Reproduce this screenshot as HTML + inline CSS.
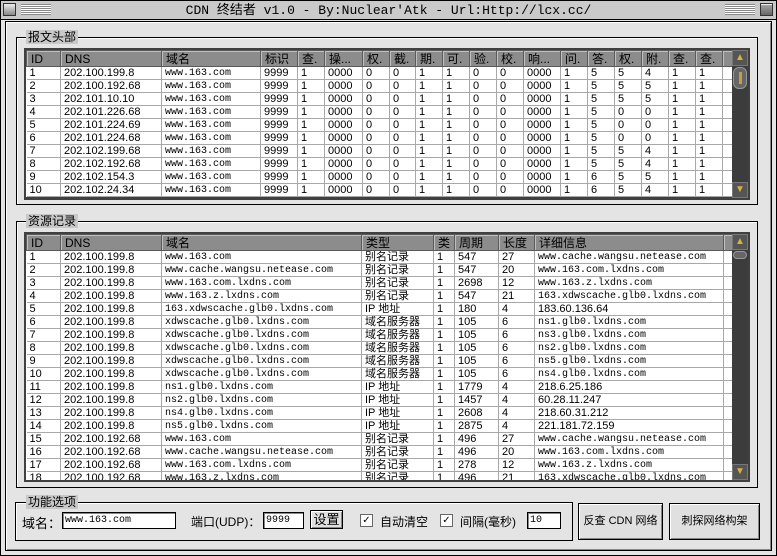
<!DOCTYPE html>
<html><head><meta charset="utf-8"><style>
*{box-sizing:border-box;margin:0;padding:0}
body{width:777px;height:556px;background:#e4e4e4;font-family:"Liberation Sans","WenQuanYi Zen Hei",sans-serif;font-size:12px;color:#000;position:relative;overflow:hidden}
.abs{position:absolute}
#win{left:0;top:0;width:777px;height:556px;border:1px solid #000;background:#e4e4e4}
#title{left:1px;top:1px;width:775px;height:19px;background:#cacaca;border-bottom:1px solid #000;text-align:center;font-family:"Liberation Mono","WenQuanYi Zen Hei",monospace;font-size:13px;line-height:19px}
#inner{left:5px;top:21px;width:767px;height:530px;border:1px solid #000;box-shadow:inset 1px 1px 0 #fff, inset -1px -1px 0 #888}
.grp{border:1px solid #000;box-shadow:1px 1px 0 #fff inset}
.lg{background:#c8c8c8;padding:0 2px;font-size:12px;line-height:14px}
table{border-collapse:collapse;table-layout:fixed;background:#fff}
td{height:13px;border-right:1px solid #a8a8a8;border-bottom:1px solid #a8a8a8;padding:0 0 0 3px;font-size:11px;line-height:12px;white-space:nowrap;overflow:hidden;vertical-align:middle}
th{height:16px;background:#8c8c8c;border:1px solid #5a5a5a;box-shadow:inset 1px 1px 0 #c0c0c0;font-weight:normal;text-align:left;padding-left:4px;font-size:12px;line-height:14px;white-space:nowrap;overflow:hidden}
td.m{font-family:"Liberation Mono",monospace;font-size:10px;line-height:11px;vertical-align:bottom}
.tbox{border:2px solid #404040;background:#404040;overflow:hidden}
.sb{background:#3c3c3c}
.arr{width:16px;height:16px;background:#555;border:1px solid #777;color:#d8b040;font-size:10px;text-align:center;line-height:14px}
.btn{background:#e0e0e0;border:1px solid #000;box-shadow:inset 1px 1px 0 #fff,inset -1px -1px 0 #888;text-align:center}
.inp{background:#fff;border:1px solid #000;box-shadow:inset 1px 1px 0 #888;font-family:"Liberation Mono",monospace;font-size:10px;line-height:16px;padding-left:2px}
.cb{width:13px;height:13px;background:#fff;border:1px solid #666;font-size:10px;line-height:11px;text-align:center}
</style></head><body>
<div id="win" class="abs"></div>
<div id="title" class="abs">CDN 终结者 v1.0 - By:Nuclear'Atk - Url:Http://lcx.cc/</div>
<div class="abs" style="left:3px;top:3px;width:13px;height:13px;border:1px solid #333;background:linear-gradient(#eee,#888)"></div>
<div class="abs" style="left:21px;top:4px;width:30px;height:11px;background:repeating-linear-gradient(#888 0 1px,#fff 1px 2px)"></div>
<div class="abs" style="left:725px;top:4px;width:30px;height:11px;background:repeating-linear-gradient(#888 0 1px,#fff 1px 2px)"></div>
<div class="abs" style="left:760px;top:3px;width:13px;height:13px;border:1px solid #333;background:linear-gradient(#aaa,#666);box-shadow:inset 0 6px 0 -5px #eee"></div>
<div id="inner" class="abs"></div>

<!-- group 1 -->
<div class="abs grp" style="left:16px;top:37px;width:742px;height:168px"></div>
<div class="abs lg" style="left:26px;top:30px">报文头部</div>
<div class="abs tbox" style="left:24px;top:48px;width:726px;height:152px">
<table style="width:706px">
<colgroup><col style="width:34px"><col style="width:101px"><col style="width:99px"><col style="width:37px"><col style="width:27px"><col style="width:38px"><col style="width:27px"><col style="width:26px"><col style="width:27px"><col style="width:27px"><col style="width:27px"><col style="width:27px"><col style="width:37px"><col style="width:27px"><col style="width:27px"><col style="width:27px"><col style="width:27px"><col style="width:27px"><col style="width:27px"><col style="width:10px"></colgroup>
<tr><th>ID</th><th>DNS</th><th>域名</th><th>标识</th><th>查.</th><th>操...</th><th>权.</th><th>截.</th><th>期.</th><th>可.</th><th>验.</th><th>校.</th><th>响...</th><th>问.</th><th>答.</th><th>权.</th><th>附.</th><th>查.</th><th>查.</th><th></th></tr>
<tr><td>1</td><td>202.100.199.8</td><td class="m">www.163.com</td><td>9999</td><td>1</td><td>0000</td><td>0</td><td>0</td><td>1</td><td>1</td><td>0</td><td>0</td><td>0000</td><td>1</td><td>5</td><td>5</td><td>4</td><td>1</td><td>1</td><td></td></tr>
<tr><td>2</td><td>202.100.192.68</td><td class="m">www.163.com</td><td>9999</td><td>1</td><td>0000</td><td>0</td><td>0</td><td>1</td><td>1</td><td>0</td><td>0</td><td>0000</td><td>1</td><td>5</td><td>5</td><td>5</td><td>1</td><td>1</td><td></td></tr>
<tr><td>3</td><td>202.101.10.10</td><td class="m">www.163.com</td><td>9999</td><td>1</td><td>0000</td><td>0</td><td>0</td><td>1</td><td>1</td><td>0</td><td>0</td><td>0000</td><td>1</td><td>5</td><td>5</td><td>5</td><td>1</td><td>1</td><td></td></tr>
<tr><td>4</td><td>202.101.226.68</td><td class="m">www.163.com</td><td>9999</td><td>1</td><td>0000</td><td>0</td><td>0</td><td>1</td><td>1</td><td>0</td><td>0</td><td>0000</td><td>1</td><td>5</td><td>0</td><td>0</td><td>1</td><td>1</td><td></td></tr>
<tr><td>5</td><td>202.101.224.69</td><td class="m">www.163.com</td><td>9999</td><td>1</td><td>0000</td><td>0</td><td>0</td><td>1</td><td>1</td><td>0</td><td>0</td><td>0000</td><td>1</td><td>5</td><td>0</td><td>0</td><td>1</td><td>1</td><td></td></tr>
<tr><td>6</td><td>202.101.224.68</td><td class="m">www.163.com</td><td>9999</td><td>1</td><td>0000</td><td>0</td><td>0</td><td>1</td><td>1</td><td>0</td><td>0</td><td>0000</td><td>1</td><td>5</td><td>0</td><td>0</td><td>1</td><td>1</td><td></td></tr>
<tr><td>7</td><td>202.102.199.68</td><td class="m">www.163.com</td><td>9999</td><td>1</td><td>0000</td><td>0</td><td>0</td><td>1</td><td>1</td><td>0</td><td>0</td><td>0000</td><td>1</td><td>5</td><td>5</td><td>4</td><td>1</td><td>1</td><td></td></tr>
<tr><td>8</td><td>202.102.192.68</td><td class="m">www.163.com</td><td>9999</td><td>1</td><td>0000</td><td>0</td><td>0</td><td>1</td><td>1</td><td>0</td><td>0</td><td>0000</td><td>1</td><td>5</td><td>5</td><td>4</td><td>1</td><td>1</td><td></td></tr>
<tr><td>9</td><td>202.102.154.3</td><td class="m">www.163.com</td><td>9999</td><td>1</td><td>0000</td><td>0</td><td>0</td><td>1</td><td>1</td><td>0</td><td>0</td><td>0000</td><td>1</td><td>6</td><td>5</td><td>5</td><td>1</td><td>1</td><td></td></tr>
<tr><td>10</td><td>202.102.24.34</td><td class="m">www.163.com</td><td>9999</td><td>1</td><td>0000</td><td>0</td><td>0</td><td>1</td><td>1</td><td>0</td><td>0</td><td>0000</td><td>1</td><td>6</td><td>5</td><td>4</td><td>1</td><td>1</td><td></td></tr>
</table></div>
<div class="abs sb" style="left:732px;top:50px;width:16px;height:148px"></div>
<div class="abs arr" style="left:732px;top:50px">▲</div>
<div class="abs" style="left:733px;top:67px;width:14px;height:22px;border-radius:6px;background:#666;border:1px solid #999"><div style="margin:4px auto;width:3px;height:12px;background:#c0a040"></div></div>
<div class="abs arr" style="left:732px;top:182px">▼</div>

<!-- group 2 -->
<div class="abs grp" style="left:16px;top:221px;width:742px;height:267px"></div>
<div class="abs lg" style="left:26px;top:214px">资源记录</div>
<div class="abs tbox" style="left:24px;top:232px;width:726px;height:250px">
<table style="width:706px">
<colgroup><col style="width:34px"><col style="width:101px"><col style="width:200px"><col style="width:72px"><col style="width:21px"><col style="width:44px"><col style="width:36px"><col style="width:189px"><col style="width:9px"></colgroup>
<tr><th>ID</th><th>DNS</th><th>域名</th><th>类型</th><th>类</th><th>周期</th><th>长度</th><th>详细信息</th><th></th></tr>
<tr><td>1</td><td>202.100.199.8</td><td class="m">www.163.com</td><td>别名记录</td><td>1</td><td>547</td><td>27</td><td class="m">www.cache.wangsu.netease.com</td><td></td></tr>
<tr><td>2</td><td>202.100.199.8</td><td class="m">www.cache.wangsu.netease.com</td><td>别名记录</td><td>1</td><td>547</td><td>20</td><td class="m">www.163.com.lxdns.com</td><td></td></tr>
<tr><td>3</td><td>202.100.199.8</td><td class="m">www.163.com.lxdns.com</td><td>别名记录</td><td>1</td><td>2698</td><td>12</td><td class="m">www.163.z.lxdns.com</td><td></td></tr>
<tr><td>4</td><td>202.100.199.8</td><td class="m">www.163.z.lxdns.com</td><td>别名记录</td><td>1</td><td>547</td><td>21</td><td class="m">163.xdwscache.glb0.lxdns.com</td><td></td></tr>
<tr><td>5</td><td>202.100.199.8</td><td class="m">163.xdwscache.glb0.lxdns.com</td><td>IP 地址</td><td>1</td><td>180</td><td>4</td><td>183.60.136.64</td><td></td></tr>
<tr><td>6</td><td>202.100.199.8</td><td class="m">xdwscache.glb0.lxdns.com</td><td>域名服务器</td><td>1</td><td>105</td><td>6</td><td class="m">ns1.glb0.lxdns.com</td><td></td></tr>
<tr><td>7</td><td>202.100.199.8</td><td class="m">xdwscache.glb0.lxdns.com</td><td>域名服务器</td><td>1</td><td>105</td><td>6</td><td class="m">ns3.glb0.lxdns.com</td><td></td></tr>
<tr><td>8</td><td>202.100.199.8</td><td class="m">xdwscache.glb0.lxdns.com</td><td>域名服务器</td><td>1</td><td>105</td><td>6</td><td class="m">ns2.glb0.lxdns.com</td><td></td></tr>
<tr><td>9</td><td>202.100.199.8</td><td class="m">xdwscache.glb0.lxdns.com</td><td>域名服务器</td><td>1</td><td>105</td><td>6</td><td class="m">ns5.glb0.lxdns.com</td><td></td></tr>
<tr><td>10</td><td>202.100.199.8</td><td class="m">xdwscache.glb0.lxdns.com</td><td>域名服务器</td><td>1</td><td>105</td><td>6</td><td class="m">ns4.glb0.lxdns.com</td><td></td></tr>
<tr><td>11</td><td>202.100.199.8</td><td class="m">ns1.glb0.lxdns.com</td><td>IP 地址</td><td>1</td><td>1779</td><td>4</td><td>218.6.25.186</td><td></td></tr>
<tr><td>12</td><td>202.100.199.8</td><td class="m">ns2.glb0.lxdns.com</td><td>IP 地址</td><td>1</td><td>1457</td><td>4</td><td>60.28.11.247</td><td></td></tr>
<tr><td>13</td><td>202.100.199.8</td><td class="m">ns4.glb0.lxdns.com</td><td>IP 地址</td><td>1</td><td>2608</td><td>4</td><td>218.60.31.212</td><td></td></tr>
<tr><td>14</td><td>202.100.199.8</td><td class="m">ns5.glb0.lxdns.com</td><td>IP 地址</td><td>1</td><td>2875</td><td>4</td><td>221.181.72.159</td><td></td></tr>
<tr><td>15</td><td>202.100.192.68</td><td class="m">www.163.com</td><td>别名记录</td><td>1</td><td>496</td><td>27</td><td class="m">www.cache.wangsu.netease.com</td><td></td></tr>
<tr><td>16</td><td>202.100.192.68</td><td class="m">www.cache.wangsu.netease.com</td><td>别名记录</td><td>1</td><td>496</td><td>20</td><td class="m">www.163.com.lxdns.com</td><td></td></tr>
<tr><td>17</td><td>202.100.192.68</td><td class="m">www.163.com.lxdns.com</td><td>别名记录</td><td>1</td><td>278</td><td>12</td><td class="m">www.163.z.lxdns.com</td><td></td></tr>
<tr><td>18</td><td>202.100.192.68</td><td class="m">www.163.z.lxdns.com</td><td>别名记录</td><td>1</td><td>496</td><td>21</td><td class="m">163.xdwscache.glb0.lxdns.com</td><td></td></tr>
</table></div>
<div class="abs sb" style="left:732px;top:234px;width:16px;height:246px"></div>
<div class="abs arr" style="left:732px;top:234px">▲</div>
<div class="abs" style="left:733px;top:251px;width:14px;height:8px;border-radius:4px;background:#666;border:1px solid #999"></div>
<div class="abs arr" style="left:732px;top:464px">▼</div>

<!-- group 3 -->
<div class="abs grp" style="left:15px;top:502px;width:558px;height:39px"></div>
<div class="abs lg" style="left:26px;top:495px">功能选项</div>
<div class="abs" style="left:22px;top:513px;font-size:13px">域名：</div>
<div class="abs inp" style="left:62px;top:512px;width:114px;height:17px">www.163.com</div>
<div class="abs" style="left:191px;top:513px;font-size:12px">端口(UDP)：</div>
<div class="abs inp" style="left:263px;top:512px;width:41px;height:17px">9999</div>
<div class="abs btn" style="left:310px;top:510px;width:33px;height:19px;line-height:17px;font-size:13px">设置</div>
<div class="abs cb" style="left:360px;top:514px">✓</div>
<div class="abs" style="left:380px;top:513px;font-size:12px">自动清空</div>
<div class="abs cb" style="left:440px;top:514px">✓</div>
<div class="abs" style="left:460px;top:513px;font-size:12px">间隔(毫秒)</div>
<div class="abs inp" style="left:527px;top:512px;width:34px;height:17px">10</div>
<div class="abs btn" style="left:578px;top:503px;width:85px;height:37px;line-height:35px;font-size:11px">反查 CDN 网络</div>
<div class="abs btn" style="left:669px;top:503px;width:91px;height:37px;line-height:35px;font-size:11px">刺探网络构架</div>
</body></html>
